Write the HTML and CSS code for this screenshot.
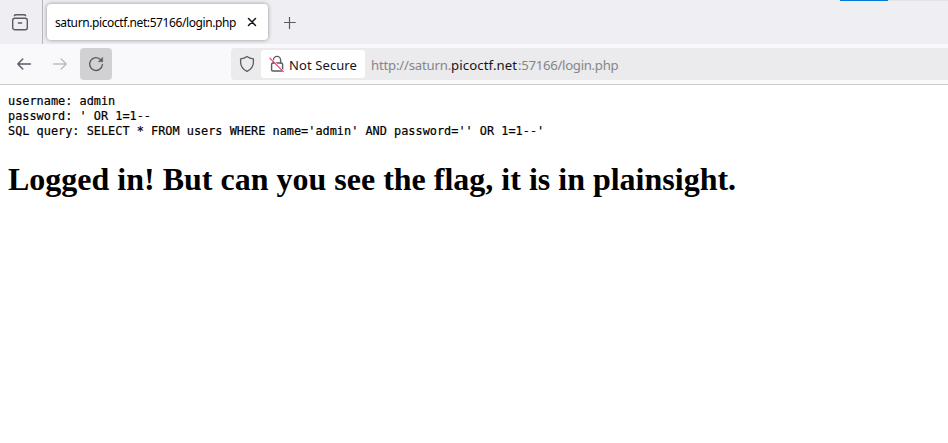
FILE: index.html
```html
<!DOCTYPE html>
<html lang="en">
<head>
<meta charset="utf-8">
<title>saturn.picoctf.net:57166/login.php</title>
<link rel="stylesheet" href="styles.css">
</head>
<body>
<div class="tabbar">
  <div class="view">
    <svg width="18" height="18" viewBox="0 0 18 18"><path d="M3.3 1.7Q3.7.8 5 .8h8q1.3 0 1.7.9"/><rect x="1.7" y="4.2" width="14.6" height="11.5" rx="2"/><path d="M7.4 9h3.2"/></svg>
  </div>
  <div class="tab">
    <span class="tab-title">saturn.picoctf.net:57166/login.php</span>
    <svg class="close" width="10" height="10" viewBox="0 0 10 10"><path d="M1.5 1.5l7 7M8.5 1.5l-7 7"/></svg>
  </div>
  <svg class="plus" width="12" height="12" viewBox="0 0 12 12"><path d="M5.5 .2v11.6M0 5.5h11.3"/></svg>
  <div class="progress"></div>
</div>
<div class="toolbar">
  <div class="btn"><svg width="16" height="16" viewBox="0 0 16 16"><path d="M14.5 8H1.8M6.8 3L1.8 8l5 5"/></svg></div>
  <div class="btn dim"><svg width="16" height="16" viewBox="0 0 16 16"><path d="M1.5 8h12.7M9.2 3l5 5-5 5"/></svg></div>
  <div class="btn pressed"><svg width="16" height="16" viewBox="0 0 16 16"><path d="M13 4A6.4 6.4 0 1 0 14.4 8.5"/><path class="fill" d="M14.7 1.5v4.2h-4.2z"/></svg></div>
  <div class="urlbar">
    <svg class="shield" width="16" height="18" viewBox="0 0 16 18"><path d="M8 1.4Q10.6 3.3 14.4 3.9V7.5Q14.2 13.5 8 16.3 1.8 13.5 1.6 7.5V3.9Q5.4 3.3 8 1.4z"/></svg>
    <div class="identity">
      <svg width="16" height="18" viewBox="0 0 16 18"><path d="M4.4 8V5a3.6 3.6 0 0 1 7.2 0v3"/><rect x="2.6" y="8" width="11" height="8" rx="1.3"/><path class="cut" d="M1.2 2.6l13.4 13.6"/><path class="slash" d="M.8 3.2l13.5 13.5"/></svg>
      <span class="label">Not Secure</span>
    </div>
    <div class="url"><span class="scheme">http://saturn.</span><span class="domain">picoctf.net</span><span class="path">:57166/login.php</span></div>
  </div>
</div>
<main>
<pre>username: admin
password: ' OR 1=1--
SQL query: SELECT * FROM users WHERE name='admin' AND password='' OR 1=1--'
</pre>
<h1>Logged in! But can you see the flag, it is in plainsight.</h1>
</main>
</body>
</html>
```
FILE: styles.css
```css
* { box-sizing: border-box; }
body { margin: 0; background: #fff; color: #000; overflow: hidden; }
svg { display: block; flex: none; fill: none; stroke: #5b5b66; stroke-width: 1.4; stroke-linecap: round; stroke-linejoin: round; }
.tabbar { position: relative; display: flex; align-items: center; height: 44px; background: #efeef3; font-family: "Noto Sans", sans-serif; }
.view { width: 43px; height: 44px; padding: 14px 0 0 11px; border-right: 1px solid #b5b5bb; }
.tab { display: flex; align-items: center; width: 221px; height: 36px; margin-left: 4px; padding-left: 8px; background: #fff; border-radius: 4px; box-shadow: 0 0 4px rgba(0,0,0,.4); font-size: 12px; white-space: nowrap; }
.tab-title { width: 181px; padding-top: 1px; letter-spacing: -.4px; }
.close { margin-left: 11px; stroke: #15141a; stroke-width: 1.5; }
.plus { margin: 2px 0 0 16px; stroke-width: 1.2; }
.progress { position: absolute; top: 0; right: 0; width: 108px; height: 1px; background: linear-gradient(90deg, #0078d7 48px, #e3e3e3 48px); }
.toolbar { display: flex; align-items: center; gap: 4px; height: 41px; padding-left: 8px; background: #f9f9fb; border-bottom: 1px solid #ccc; font-family: "Noto Sans", sans-serif; }
.btn { display: flex; align-items: center; justify-content: center; width: 32px; height: 32px; border-radius: 4px; }
.dim svg { stroke: #bdbdc2; }
.pressed { background: #d1d1d3; }
.btn .fill { fill: #5b5b66; stroke-width: .5; }
.urlbar { display: flex; flex: 1; align-items: center; height: 32px; margin-left: 115px; padding-left: 8px; background: #ebebed; border-radius: 4px 0 0 4px; white-space: nowrap; }
.shield { stroke-width: 1.3; }
.identity { display: flex; align-items: center; width: 104px; height: 28px; margin-left: 6px; padding-left: 8px; background: #fff; border-radius: 3px; color: #15141a; }
.label { margin-left: 4px; padding-top: 2px; font-size: 13px; letter-spacing: .1px; }
.cut { stroke: #fff; stroke-width: 1.3; }
.slash { stroke: #ee4468; stroke-width: 1.2; }
.url { display: flex; margin-left: 6px; padding-top: 2px; color: #85858a; font-size: 13.2px; }
.scheme { width: 80px; letter-spacing: -.2px; }
.domain { width: 67px; color: #15141a; letter-spacing: .1px; }
.path { letter-spacing: -.3px; }
main { padding: 9px 8px; }
pre { margin: 0; font: 11.88px/15px "DejaVu Sans Mono", monospace; -webkit-text-stroke: .2px #000; }
h1 { margin: 22px 0 0; font: bold 32px/37px "Liberation Serif", serif; }
```
